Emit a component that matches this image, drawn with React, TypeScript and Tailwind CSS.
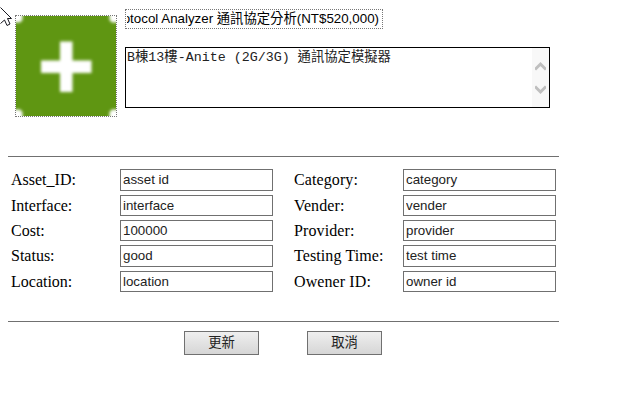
const sans = "font-['Liberation_Sans','Noto_Sans_CJK_TC',sans-serif]";

const rows = [
  { h: "h-[22px]", gap: "mt-0", left: ["Asset_ID:", "asset id"], right: ["Category:", "category"] },
  { h: "h-[21px]", gap: "mt-1", left: ["Interface:", "interface"], right: ["Vender:", "vender"] },
  { h: "h-[21px]", gap: "mt-1", left: ["Cost:", "100000"], right: ["Provider:", "provider"] },
  { h: "h-[22px]", gap: "mt-1", left: ["Status:", "good"], right: ["Testing Time:", "test time"] },
  { h: "h-[21px]", gap: "mt-1", left: ["Location:", "location"], right: ["Owener ID:", "owner id"] },
];

function Field({ value, h }: { value: string; h: string }) {
  return (
    <input
      defaultValue={value}
      className={`${h} ${sans} block w-[153px] shrink-0 border border-[#707070] bg-white px-[2px] pb-px text-[13.33px] leading-4 text-[#222] outline-none`}
    />
  );
}

function AddTile() {
  return (
    <div className="h-[102px] w-[102px] shrink-0 border border-dotted border-[#777]">
      <svg width="100" height="100" viewBox="0 0 100 100" className="block">
        <defs>
          <filter id="soft" x="-30%" y="-30%" width="160%" height="160%">
            <feGaussianBlur stdDeviation="1.5" />
          </filter>
        </defs>
        <rect width="100" height="100" fill="#5f9612" />
        <g fill="#fff" filter="url(#soft)">
          <path d="M44 25.500h12.500v19h19v12.500h-19v19h-12.500v-19h-19v-12.500h19z" />
          <path d="M-6-6H6.500V4L4 6.500H-6zM106-6H93.500V4L96 6.500H106zM-6 106H6.500V96L4 93.500H-6zM106 106H93.500V96L96 93.500H106z" />
        </g>
      </svg>
    </div>
  );
}

function ActionButton({ children }: { children: string }) {
  return (
    <button
      className={`${sans} flex h-6 w-[75px] items-center justify-center border border-[#707070] bg-linear-to-b from-[#efefef] to-[#d6d6d6] text-[13.33px] leading-5 text-[#222]`}
    >
      {children}
    </button>
  );
}

export default function App() {
  return (
    <main className="relative h-[410px] w-[633px] overflow-hidden bg-white font-['Liberation_Serif',serif] text-base text-black">
      <svg className="absolute top-0 left-0" width="13" height="27" viewBox="0 0 13 27">
        <path
          d="M.5 7.500L11.500 18.500H7.500L10 24L7 25.500L4.500 20L.5 23.500"
          fill="#fff"
          stroke="#181820"
          strokeWidth="1"
        />
      </svg>

      <header className="flex h-[156px] gap-2 pl-[15px]">
        <div className="pt-[15px]">
          <AddTile />
        </div>
        <div className="pt-[9px]">
          <div
            className={`${sans} flex h-5 w-[258px] border border-dotted border-[#777] pr-[3px] pl-px text-[13.33px] leading-[18px]`}
          >
            <div className="flex w-full justify-end overflow-hidden">
              <span className="shrink-0 whitespace-nowrap">otocol Analyzer 通訊協定分析(NT$520,000)</span>
            </div>
          </div>
          <div className="mt-[18px] flex h-[61px] w-[425px] border border-black">
            <p className="grow pt-[2px] pl-[1px] font-['Liberation_Mono','Noto_Sans_CJK_TC',monospace] text-[13.33px] leading-4 whitespace-pre text-[#222]">
              B棟13樓-Anite (2G/3G) 通訊協定模擬器
            </p>
            <div className="flex w-[17px] shrink-0 justify-center bg-[#f8f8f8]">
              <svg width="11" height="59" viewBox="0 0 11 59" fill="none" stroke="#bfbfbf" strokeWidth="3">
                <path d="M0 21.500L5.500 16L11 21.500M0 38.500L5.500 44L11 38.500" />
              </svg>
            </div>
          </div>
        </div>
      </header>

      <hr className="ml-2 w-[551px] border-t border-[#707070]" />

      <section className="h-[164px] pt-3 pl-[11px]">
        {rows.map((row) => (
          <div key={row.left[0]} className={`${row.gap} ${row.h} flex items-center`}>
            <label className="w-[109px] shrink-0 leading-5">{row.left[0]}</label>
            <Field value={row.left[1]} h={row.h} />
            <label className="ml-[21px] w-[109px] shrink-0 leading-5 tracking-[0.1px]">{row.right[0]}</label>
            <Field value={row.right[1]} h={row.h} />
          </div>
        ))}
      </section>

      <hr className="ml-2 w-[551px] border-t border-[#707070]" />

      <footer className="flex gap-12 pt-[9px] pl-[184px]">
        <ActionButton>更新</ActionButton>
        <ActionButton>取消</ActionButton>
      </footer>
    </main>
  );
}
